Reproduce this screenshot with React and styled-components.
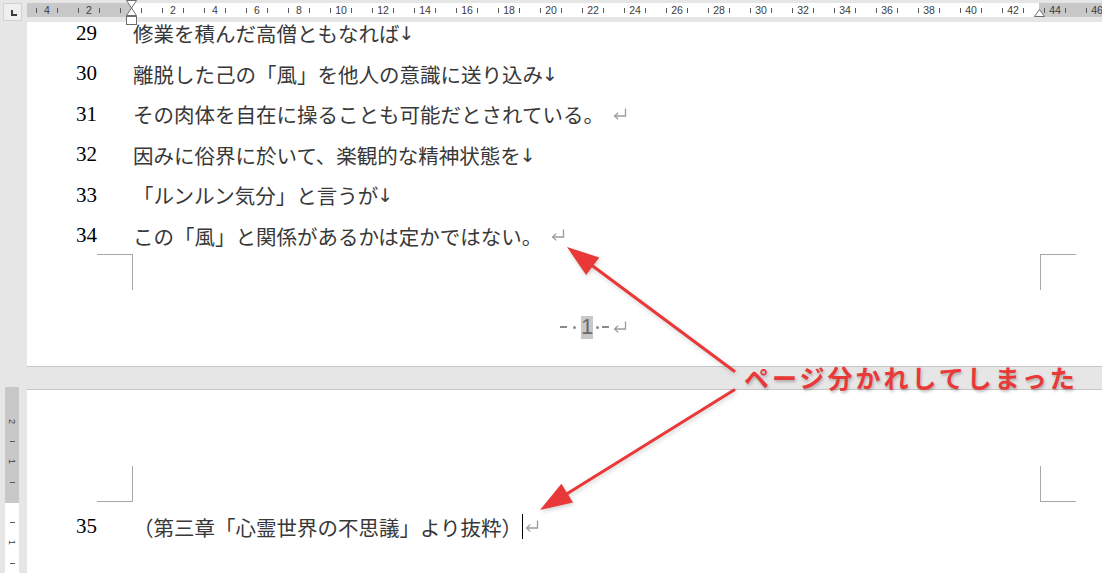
import React from "react";
import styled, { createGlobalStyle } from "styled-components";

const Global = createGlobalStyle`
  html, body { margin: 0; padding: 0; background: #e6e6e6; }
  * { box-sizing: border-box; }
`;

const Root = styled.div`
  position: relative;
  width: 1102px;
  height: 573px;
  overflow: hidden;
  background: #e6e6e6;
  display: flex;
  flex-direction: column;
  font-family: "Noto Sans CJK JP", "Noto Sans", sans-serif;
`;

const RulerBar = styled.div`
  height: 22px;
  flex: none;
  display: flex;
`;

const TabCorner = styled.div`
  flex: none;
  width: 19px;
  height: 18px;
  margin: 3px 5px 1px 3px;
  border: 1px solid #d2d2d2;
  background: #efefef;
  display: flex;
  align-items: center;
  justify-content: center;
`;

const TabGlyph = styled.span`
  width: 6px;
  height: 6px;
  margin: 2px 0 0 2px;
  border-left: 2px solid #3a3a3a;
  border-bottom: 2px solid #3a3a3a;
`;

const HRuler = styled.div`
  position: relative;
  flex: 1;
  min-width: 0;
  height: 14px;
  margin-top: 3px;
  background: linear-gradient(
    to right,
    #c8c8c8 0 104px,
    #ffffff 104px 1012px,
    #c8c8c8 1012px
  );
`;

const Scale = styled.div`
  display: flex;
  height: 100%;
  margin-left: -1px;
  overflow: hidden;
`;

const ScaleCell = styled.div`
  flex: none;
  width: 42px;
  height: 100%;
  padding: 0 10px;
  display: flex;
  align-items: center;
  justify-content: space-between;
`;

const Tick = styled.span`
  width: 1px;
  height: 5px;
  background: #5a5a5a;
`;

const ScaleNum = styled.span`
  width: 0;
  display: flex;
  justify-content: center;
  font-family: "Liberation Sans", Arial, sans-serif;
  font-size: 10.5px;
  line-height: 14px;
  color: #3c3c3c;
  white-space: nowrap;
`;

const Marker = styled.svg`
  position: absolute;
  left: ${(p) => p.$left}px;
  top: ${(p) => p.$top}px;
  overflow: visible;
`;

const Body = styled.div`
  flex: 1;
  display: grid;
  grid-template-columns: 27px 1fr;
  grid-template-rows: 345px 22px 1fr;
`;

const Page = styled.div`
  grid-column: 2;
  background: #ffffff;
  overflow: hidden;
  display: flex;
  flex-direction: column;
  ${(p) => (p.$first ? "border-bottom: 1px solid #c6c6c6;" : "border-top: 1px solid #c6c6c6;")}
`;

const Gap = styled.div`
  grid-column: 2;
`;

const VRuler = styled.div`
  grid-column: 1;
  grid-row: 3;
  width: 14px;
  margin: -2px 0 0 5px;
  background: linear-gradient(to bottom, #c8c8c8 0 116px, #ffffff 116px);
  display: flex;
  flex-direction: column;
  align-items: center;
  padding-top: 24px;
`;

const VCell = styled.div`
  height: 20.3px;
  flex: none;
  display: flex;
  align-items: center;
  justify-content: center;
`;

const VTick = styled.span`
  width: 5px;
  height: 1px;
  background: #5a5a5a;
`;

const VNum = styled.span`
  display: block;
  transform: rotate(90deg);
  font-family: "Liberation Sans", Arial, sans-serif;
  font-size: 9px;
  line-height: 9px;
  color: #3c3c3c;
`;

const Lines = styled.div`
  display: flex;
  flex-direction: column;
  margin-top: ${(p) => p.$mt}px;
`;

const Line = styled.div`
  display: flex;
  align-items: center;
  height: 40.6px;
  white-space: nowrap;
`;

const LineNo = styled.span`
  width: 70px;
  text-align: right;
  font-family: "Liberation Serif", "Times New Roman", serif;
  font-size: 21px;
  color: #000;
`;

const LineText = styled.span`
  margin-left: 36px;
  display: flex;
  align-items: center;
  font-family: "Noto Sans CJK JP", sans-serif;
  font-size: 20.5px;
  color: #383838;
`;

const BreakMark = styled.span`
  font-family: "DejaVu Sans", sans-serif;
  font-size: 19px;
  color: #3c3c3c;
  margin-left: -1px;
`;

const ReturnSvg = styled.svg`
  flex: none;
  margin-left: ${(p) => p.$ml}px;
  margin-top: ${(p) => p.$mt || 0}px;
`;

function ReturnMark({ ml = 9, mt = 0 }) {
  return (
    <ReturnSvg $ml={ml} $mt={mt} width="14" height="13" viewBox="0 0 14 13">
      <path d="M12.5 0.5 V8 H1.8" fill="none" stroke="#9a9a9a" strokeWidth="1.3" />
      <path d="M5.2 4.6 L1.6 8 L5.2 11.4" fill="none" stroke="#9a9a9a" strokeWidth="1.3" />
    </ReturnSvg>
  );
}

const Cursor = styled.span`
  display: inline-block;
  width: 1px;
  height: 25px;
  background: #000;
`;

const MarksRow = styled.div`
  display: flex;
  justify-content: space-between;
  padding: 0 26px 0 70px;
  margin-top: ${(p) => p.$mt}px;
`;

const CornerMark = styled.div`
  width: 36px;
  height: 36px;
  border-color: #a8a8a8;
  border-style: solid;
  border-width: 0;
  ${(p) => (p.$edge === "top" ? "border-top-width: 1px;" : "border-bottom-width: 1px;")}
  ${(p) => (p.$side === "left" ? "border-right-width: 1px;" : "border-left-width: 1px;")}
`;

const PageNumRow = styled.div`
  display: flex;
  align-items: center;
  height: 24px;
  margin-top: 25px;
  padding-left: 533px;
  font-family: "Liberation Sans", Arial, sans-serif;
  color: #7a7a7a;
`;

const PnDash = styled.span`
  width: 7px;
  height: 2px;
  background: #8a8a8a;
`;

const PnDot = styled.span`
  width: ${(p) => p.$w}px;
  display: flex;
  justify-content: center;
  &::before {
    content: "";
    width: 3px;
    height: 3px;
    border-radius: 2px;
    background: #8a8a8a;
  }
`;

const PnNum = styled.span`
  width: 12px;
  height: 23px;
  background: #c8c8c8;
  display: flex;
  align-items: center;
  justify-content: center;
  font-size: 22px;
  color: #6a6a6a;
`;

const Overlay = styled.svg`
  position: absolute;
  left: 0;
  top: 0;
  pointer-events: none;
  filter: drop-shadow(1px 2px 2px rgba(0, 0, 0, 0.18));
`;

const Callout = styled.div`
  position: absolute;
  left: 744px;
  top: 362px;
  font-family: "Noto Sans CJK JP", sans-serif;
  font-weight: 700;
  font-size: 25px;
  letter-spacing: 3px;
  line-height: 30px;
  color: #e83838;
  white-space: nowrap;
  text-shadow: 1px 2px 3px rgba(0, 0, 0, 0.25);
`;

const page1Lines = [
  { n: 29, t: "修業を積んだ高僧ともなれば", end: "br" },
  { n: 30, t: "離脱した己の「風」を他人の意識に送り込み", end: "br" },
  { n: 31, t: "その肉体を自在に操ることも可能だとされている。", end: "para" },
  { n: 32, t: "因みに俗界に於いて、楽観的な精神状態を", end: "br" },
  { n: 33, t: "「ルンルン気分」と言うが", end: "br" },
  { n: 34, t: "この「風」と関係があるかは定かではない。", end: "para" },
];

const scaleLabels = [];
for (let k = -2; k <= 23; k++) scaleLabels.push(k === 0 ? "" : String(Math.abs(k * 2)));

const vItems = ["2", "-", "1", "-", "", "-", "1", "-", "", "-", "2", "-"];

function TextLine({ n, t, end }) {
  return (
    <Line>
      <LineNo>{n}</LineNo>
      <LineText>
        {t}
        {end === "br" ? <BreakMark>↓</BreakMark> : <ReturnMark />}
      </LineText>
    </Line>
  );
}

export default function App() {
  return (
    <Root>
      <Global />
      <RulerBar>
        <TabCorner>
          <TabGlyph />
        </TabCorner>
        <HRuler>
          <Scale>
            {scaleLabels.map((l, i) => (
              <ScaleCell key={i}>
                <Tick />
                <ScaleNum>{l}</ScaleNum>
                <Tick />
              </ScaleCell>
            ))}
          </Scale>
          <Marker $left={99} $top={-3} width="11" height="26" viewBox="0 0 11 26">
            <path d="M0.5 0.5 H10.5 L5.5 8 Z" fill="#fff" stroke="#6d6d6d" />
            <path d="M5.5 8 L10.5 15.5 H0.5 Z" fill="#fff" stroke="#6d6d6d" />
            <rect x="0.5" y="16.5" width="10" height="8" fill="#fff" stroke="#6d6d6d" />
          </Marker>
          <Marker $left={1007} $top={6} width="11" height="8" viewBox="0 0 11 8">
            <path d="M5.5 0.5 L10.5 7.5 H0.5 Z" fill="#fff" stroke="#6d6d6d" />
          </Marker>
        </HRuler>
      </RulerBar>

      <Body>
        <Page $first>
          <Lines $mt={-9.3}>
            {page1Lines.map((l) => (
              <TextLine key={l.n} {...l} />
            ))}
          </Lines>
          <MarksRow $mt={-2}>
            <CornerMark $side="left" $edge="top" />
            <CornerMark $side="right" $edge="top" />
          </MarksRow>
          <PageNumRow>
            <PnDash />
            <PnDot $w={14} />
            <PnNum>1</PnNum>
            <PnDot $w={9} />
            <PnDash />
            <ReturnMark ml={4} />
          </PageNumRow>
        </Page>
        <Gap />
        <VRuler>
          {vItems.map((v, i) => (
            <VCell key={i}>{v === "-" ? <VTick /> : v ? <VNum>{v}</VNum> : null}</VCell>
          ))}
        </VRuler>
        <Page>
          <MarksRow $mt={76}>
            <CornerMark $side="left" $edge="bottom" />
            <CornerMark $side="right" $edge="bottom" />
          </MarksRow>
          <Lines $mt={4.7}>
            <Line>
              <LineNo>35</LineNo>
              <LineText>
                （第三章「心霊世界の不思議」より抜粋）
                <Cursor />
                <ReturnMark ml={2} />
              </LineText>
            </Line>
          </Lines>
        </Page>
      </Body>

      <Overlay width="1102" height="573" viewBox="0 0 1102 573">
        <line x1="734" y1="371" x2="590" y2="264" stroke="#e83838" strokeWidth="3" strokeLinecap="round" />
        <path d="M567 247 L599.3 257.4 L586.1 275 Z" fill="#e83838" />
        <line x1="734" y1="390" x2="565" y2="495" stroke="#e83838" strokeWidth="3" strokeLinecap="round" />
        <path d="M540 510 L573 502.4 L561.4 483.8 Z" fill="#e83838" />
      </Overlay>
      <Callout>ページ分かれしてしまった</Callout>
    </Root>
  );
}
